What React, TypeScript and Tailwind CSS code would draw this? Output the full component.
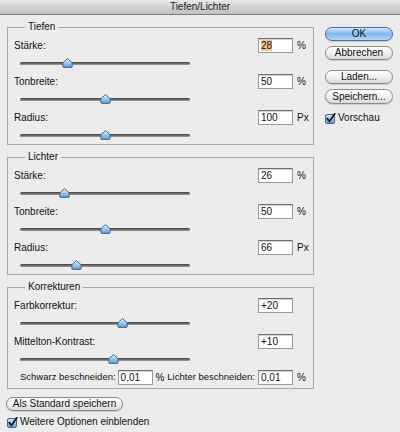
import React from 'react';

const font = { fontFamily: '"Liberation Sans", Arial, sans-serif' };

const Thumb = ({ pct }: { pct: number }) => (
  <svg
    width="11"
    height="10"
    viewBox="0 0 11 10"
    className="absolute top-[-4px]"
    style={{ left: pct * 170 - 5.5 }}
  >
    <defs>
      <linearGradient id="thumbFill" x1="0" y1="0" x2="0" y2="1">
        <stop offset="0" stopColor="#e4f1fc" />
        <stop offset="0.5" stopColor="#9cc7ee" />
        <stop offset="1" stopColor="#5d9ad6" />
      </linearGradient>
    </defs>
    <path
      d="M5.5 0.6 L10.2 4.8 V8.4 Q10.2 9.4 9.2 9.4 H1.8 Q0.8 9.4 0.8 8.4 V4.8 Z"
      fill="url(#thumbFill)"
      stroke="#3f5d80"
      strokeWidth="0.9"
    />
  </svg>
);

const Slider = ({ pct }: { pct: number }) => (
  <div className="h-[18px] flex items-center pl-[6px]">
    <div className="relative w-[170px] h-[3px] rounded-full bg-gradient-to-b from-[#3f3f3f] to-[#a0a0a0]">
      <Thumb pct={pct} />
    </div>
  </div>
);

const Field = ({ value, selected }: { value: string; selected?: boolean }) => (
  <div className="w-[35px] h-[15px] shrink-0 bg-white border border-[#9a9a9a] border-t-[#6e6e6e] shadow-[inset_0_1px_1px_rgba(0,0,0,0.18)] px-[2px] text-[10px] leading-[13px] text-[#111]">
    <span className={selected ? 'bg-[#f3c48a]' : ''}>{value}</span>
  </div>
);

const Row = ({ label, value, unit, selected }: { label: string; value: string; unit?: string; selected?: boolean }) => (
  <div className="h-[18px] flex items-center">
    <span className="flex-1 text-[10px] text-[#111]">{label}</span>
    <Field value={value} selected={selected} />
    <span className="w-[20px] pl-[4px] text-[10px] text-[#111]">{unit}</span>
  </div>
);

const Group = ({ title, className, children }: { title: string; className?: string; children: React.ReactNode }) => (
  <fieldset className={`w-[307px] border border-[#a8a8a8] pl-[6px] pt-[3px] ${className ?? ''}`}>
    <legend className="ml-[11px] px-[3px] text-[10px] leading-[12px] text-[#111]">{title}</legend>
    {children}
  </fieldset>
);

const Check = () => (
  <svg width="11" height="11" viewBox="0 0 11 11" className="shrink-0">
    <defs>
      <linearGradient id="chkFill" x1="0" y1="0" x2="0" y2="1">
        <stop offset="0" stopColor="#d6e9fb" />
        <stop offset="1" stopColor="#5f9bd8" />
      </linearGradient>
    </defs>
    <rect x="0.5" y="1.5" width="9" height="9" rx="1.5" fill="url(#chkFill)" stroke="#44648c" />
    <path d="M2.2 5.6 L4.4 8.6 L9.8 0.8" fill="none" stroke="#111" strokeWidth="1.7" strokeLinecap="round" strokeLinejoin="round" />
  </svg>
);

const Button = ({ children, primary, className }: { children: React.ReactNode; primary?: boolean; className?: string }) => (
  <div
    className={`h-[14px] rounded-full border flex items-center justify-center text-[10px] leading-[12px] text-[#111] shadow-[0_1px_1px_rgba(0,0,0,0.15)] ${
      primary
        ? 'border-[#4f6f9e] bg-gradient-to-b from-[#d4e8fb] via-[#7db6ec] to-[#b6d9f8]'
        : 'border-[#8a8a8a] bg-gradient-to-b from-white via-[#f0f0f0] to-[#dadada]'
    } ${className ?? ''}`}
  >
    {children}
  </div>
);

export default function App() {
  return (
    <div className="w-[400px] h-[432px] bg-[#ececec] flex flex-col overflow-hidden" style={font}>
      <div className="h-[15px] shrink-0 border-b border-[#7c7c7c] bg-gradient-to-b from-[#e9e9e9] to-[#bfbfbf] flex items-center justify-center text-[10px] leading-[12px] text-[#1a1a1a]">
        Tiefen/Lichter
      </div>
      <div className="flex">
        <div className="w-[318px] pl-[7px] pt-[6px] flex flex-col">
          <Group title="Tiefen">
            <Row label="Stärke:" value="28" unit="%" selected />
            <Slider pct={0.282} />
            <Row label="Tonbreite:" value="50" unit="%" />
            <Slider pct={0.5} />
            <Row label="Radius:" value="100" unit="Px" />
            <Slider pct={0.5} />
          </Group>
          <Group title="Lichter" className="mt-[6px]">
            <Row label="Stärke:" value="26" unit="%" />
            <Slider pct={0.26} />
            <Row label="Tonbreite:" value="50" unit="%" />
            <Slider pct={0.5} />
            <Row label="Radius:" value="66" unit="Px" />
            <Slider pct={0.33} />
          </Group>
          <Group title="Korrekturen" className="mt-[6px] pb-[2px]">
            <Row label="Farbkorrektur:" value="+20" />
            <Slider pct={0.6} />
            <Row label="Mittelton-Kontrast:" value="+10" />
            <Slider pct={0.55} />
            <div className="h-[18px] flex items-center whitespace-nowrap text-[10px] text-[#111]">
              <span className="pl-[6px] text-[9.5px]">Schwarz beschneiden:</span>
              <div className="ml-[2px]">
                <Field value="0,01" />
              </div>
              <span className="pl-[3px]">%</span>
              <span className="ml-auto pr-[3px] text-[9.5px]">Lichter beschneiden:</span>
              <Field value="0,01" />
              <span className="w-[20px] pl-[4px]">%</span>
            </div>
          </Group>
          <Button className="mt-[8px] w-[117px] ml-[-1px]">Als Standard speichern</Button>
          <div className="mt-[5px] flex items-center gap-[2px] text-[10px] leading-[12px] text-[#111]">
            <Check />
            <span>Weitere Optionen einblenden</span>
          </div>
        </div>
        <div className="ml-[7px] pt-[12px] w-[68px] flex flex-col">
          <Button primary>OK</Button>
          <Button className="mt-[5px]">Abbrechen</Button>
          <Button className="mt-[10px]">Laden...</Button>
          <Button className="mt-[5px] h-[15px]">Speichern...</Button>
          <div className="mt-[8px] flex items-center gap-[2px] text-[10px] leading-[12px] text-[#111]">
            <Check />
            <span>Vorschau</span>
          </div>
        </div>
      </div>
    </div>
  );
}
